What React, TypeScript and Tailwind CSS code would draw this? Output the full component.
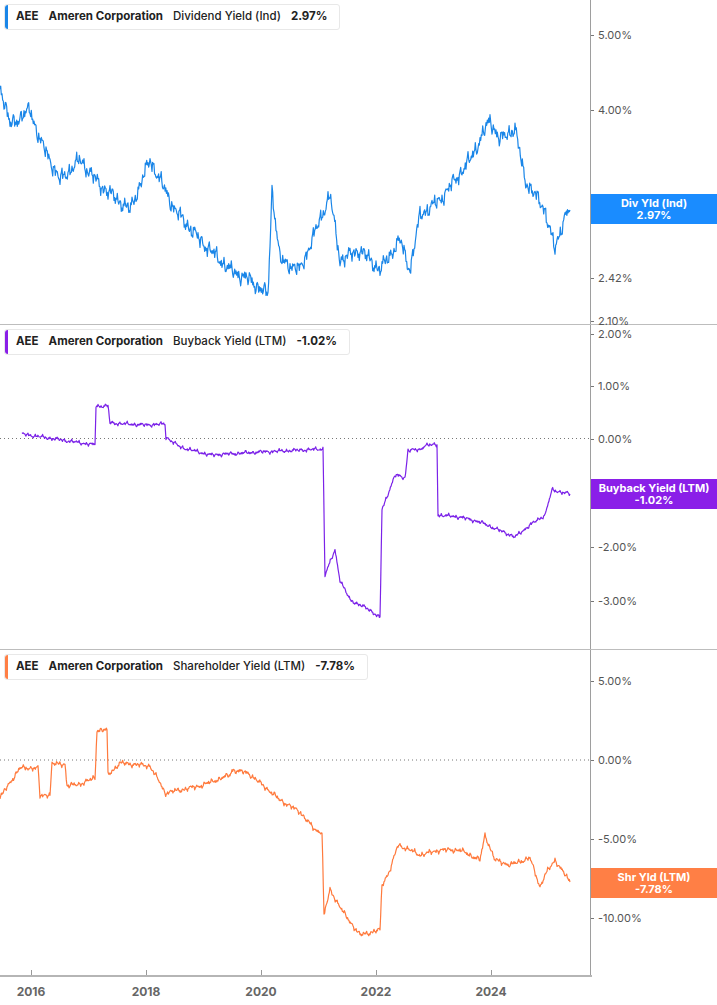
import React from "react";

type P = [number, number];
function noisy(pts: P[], amp: number, seed: number): string {
  const out: string[] = [];
  for (let i = 0; i < pts.length - 1; i++) {
    const [x0, y0] = pts[i];
    const [x1, y1] = pts[i + 1];
    const n = Math.max(1, Math.round((x1 - x0) * 1.5));
    for (let k = 0; k < n; k++) {
      const t = k / n;
      const x = x0 + (x1 - x0) * t;
      let y = y0 + (y1 - y0) * t;
      y += amp * (Math.sin(x * 1.7 + seed) * 0.6 + Math.sin(x * 4.3 + seed * 2) * 0.5 + Math.sin(x * 0.37 + seed) * 0.5 + Math.sin(x * 11.9 + seed * 3) * 0.4 + Math.sin(x * 0.9 + seed * 5) * 0.6);
      out.push(`${x.toFixed(1)},${y.toFixed(1)}`);
    }
  }
  const l = pts[pts.length - 1];
  out.push(`${l[0]},${l[1]}`);
  return out.join(" ");
}

const blue: P[] = [[0,85],[10,125],[30,110],[40,140],[60,180],[80,160],[100,185],[130,210],[150,160],[175,210],[200,240],[230,270],[250,280],[268,295],[272,190],[280,260],[300,270],[330,195],[340,260],[360,250],[380,270],[400,240],[410,270],[420,215],[440,200],[470,160],[490,120],[500,140],[515,128],[525,180],[545,210],[555,250],[565,215],[570,210]];
const purple: P[] = [[22,434],[95,445],[96,406],[108,406],[110,423],[145,425],[165,424],[166,437],[180,447],[210,455],[260,452],[323,449],[325,575],[335,550],[340,580],[350,600],[370,610],[380,618],[382,510],[395,475],[405,478],[408,450],[420,450],[425,445],[437,445],[438,515],[460,517],[480,522],[515,537],[530,525],[545,515],[552,490],[570,494]].map(([x,y]) => [x, y - 325] as P);
const orange: P[] = [[0,798],[5,790],[20,768],[38,768],[40,796],[50,794],[52,764],[65,764],[67,786],[80,784],[95,778],[97,730],[107,730],[108,775],[120,763],[150,766],[160,783],[165,793],[200,786],[230,775],[232,770],[248,773],[265,787],[280,800],[300,812],[315,830],[322,832],[324,915],[330,890],[345,915],[360,935],[380,930],[382,885],[390,870],[398,845],[410,850],[420,855],[440,850],[460,850],[480,860],[485,835],[495,860],[510,865],[530,858],[540,887],[545,875],[555,860],[570,882]].map(([x,y]) => [x, y - 650] as P);

const F = { fontFamily: "Inter, 'Liberation Sans', sans-serif" };

function Legend({ color, metric, value }: { color: string; metric: string; value: string }) {
  return (
    <div className="absolute left-[4px] top-[4px] flex items-center h-[26px] bg-white border border-[#e8e8e8] rounded-[3px] pr-3 text-[11.5px] text-[#222]">
      <div className="w-[3px] h-full rounded-l-[3px]" style={{ background: color }} />
      <span className="font-bold ml-[8px]">AEE</span>
      <span className="font-bold ml-[10px]">Ameren Corporation</span>
      <span className="ml-[10px] font-medium">{metric}</span>
      <span className="ml-[10px] font-bold">{value}</span>
    </div>
  );
}

function Tick({ y, label }: { y: number; label: string }) {
  return (
    <div className="absolute left-0 flex items-center text-[11px] text-[#555]" style={{ top: y - 8 }}>
      <div className="w-[3px] h-[1px] bg-[#777] mr-[4px]" />
      {label}
    </div>
  );
}

function Badge({ y, color, l1, l2 }: { y: number; color: string; l1: string; l2: string }) {
  return (
    <div className="absolute left-0 right-0 h-[30px] flex flex-col items-center justify-center text-white text-[11px] font-bold leading-[12px]" style={{ top: y, background: color }}>
      <span>{l1}</span>
      <span>{l2}</span>
    </div>
  );
}

function Panel({ children, ticks, line, color, border }: { children: React.ReactNode; ticks: React.ReactNode; line: string; color: string; border?: boolean }) {
  return (
    <div className={`flex h-[325px] ${border ? "border-b border-[#bdbdbd]" : ""}`}>
      <div className="relative w-[591px] border-r border-[#9e9e9e]">
        <svg className="absolute inset-0" width="591" height="325">
          {children}
          <polyline points={line} fill="none" stroke={color} strokeWidth="1.2" strokeLinejoin="round" />
        </svg>
      </div>
      <div className="relative flex-1">{ticks}</div>
    </div>
  );
}

export default function App() {
  return (
    <div className="w-[717px] h-[1005px] bg-white relative overflow-hidden" style={F}>
      <div className="relative">
        <Panel border color="#1a86e8" line={noisy(blue, 5, 1)} ticks={<>
          <Tick y={35} label="5.00%" />
          <Tick y={110} label="4.00%" />
          <Tick y={278} label="2.42%" />
          <Tick y={321} label="2.10%" />
          <Badge y={194} color="#1a8cff" l1="Div Yld (Ind)" l2="2.97%" />
        </>}>{null}</Panel>
        <Legend color="#1a86e8" metric="Dividend Yield (Ind)" value="2.97%" />
      </div>
      <div className="relative">
        <Panel border color="#7b22e8" line={noisy(purple, 1.2, 2)} ticks={<>
          <Tick y={9} label="2.00%" />
          <Tick y={61} label="1.00%" />
          <Tick y={114} label="0.00%" />
          <Tick y={222} label="-2.00%" />
          <Tick y={276} label="-3.00%" />
          <Badge y={154} color="#8a1fe8" l1="Buyback Yield (LTM)" l2="-1.02%" />
        </>}>
          <line x1="0" x2="591" y1="113.5" y2="113.5" stroke="#777" strokeDasharray="1 3" />
        </Panel>
        <Legend color="#8a1fe8" metric="Buyback Yield (LTM)" value="-1.02%" />
      </div>
      <div className="relative">
        <Panel color="#ff7a3d" line={noisy(orange, 1.6, 3)} ticks={<>
          <Tick y={31} label="5.00%" />
          <Tick y={110} label="0.00%" />
          <Tick y={189} label="-5.00%" />
          <Tick y={268} label="-10.00%" />
          <Badge y={218} color="#ff7f45" l1="Shr Yld (LTM)" l2="-7.78%" />
        </>}>
          <line x1="0" x2="591" y1="110" y2="110" stroke="#777" strokeDasharray="1 3" />
        </Panel>
        <Legend color="#ff7f45" metric="Shareholder Yield (LTM)" value="-7.78%" />
      </div>
      <div className="w-[592px] h-[2px] bg-[#b5b5b5]" />
      <div className="relative h-[28px] w-[592px] text-[12px] font-bold text-[#666]">
        {[["2016", 31], ["2018", 146], ["2020", 261], ["2022", 376], ["2024", 491]].map(([l, x]) => (
          <div key={l} className="absolute top-0 flex flex-col items-center" style={{ left: (x as number) - 20, width: 40 }}>
            <div className="w-[1px] h-[5px] bg-[#999] -mt-[7px] mb-[8px]" />
            <span>{l}</span>
          </div>
        ))}
      </div>
    </div>
  );
}
